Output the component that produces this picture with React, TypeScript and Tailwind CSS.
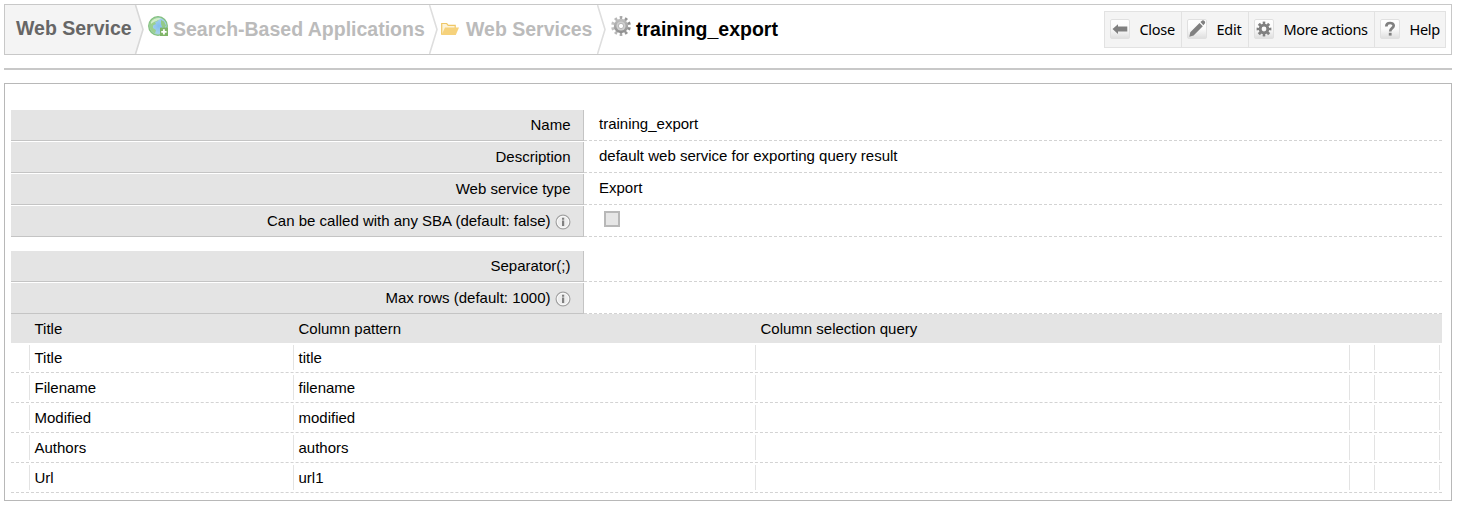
import React from "react";

function Globe() {
  return (
    <svg className="block h-5 w-5" viewBox="0 0 20 20">
      <defs>
        <radialGradient id="sea" cx="55%" cy="50%" r="55%">
          <stop offset="0" stopColor="#84bdf0" />
          <stop offset="0.7" stopColor="#a4d0ea" />
          <stop offset="1" stopColor="#a5d6a0" />
        </radialGradient>
      </defs>
      <circle cx="10" cy="10" r="9.3" fill="url(#sea)" stroke="#84c080" strokeWidth="1.3" />
      <path d="M2 6C4 2 8 1 11 2L10 5 7 6 8 8 5 9.500 5 12 8 14 7 17.500C2 15 .5 10 2 6z" fill="#9bd08f" />
      <path d="M13 4l3 1.500 2 4-1.500 2.500-2.500-1-1-3z" fill="#93ca88" />
      <path d="M3 6C5 2.500 9 1.500 13 2.200 11 4.500 6 5 3 8z" fill="#d2edcc" />
      <path d="M12.500 11.500H20V20h-8v-8z" fill="#80b568" />
      <path d="M15.900 13.200v5.400M13.200 15.900h5.400" stroke="#fff" strokeWidth="1.900" />
    </svg>
  );
}

function Folder() {
  return (
    <svg className="block h-[14px] w-[18px]" viewBox="0 0 18 14">
      <path d="M.7 12.800V1.500h5l1.500 1.800h7V6" fill="#fdf3d8" stroke="#efc766" strokeWidth="1.200" />
      <path d="M4 5.500h14L14.800 13H.5z" fill="#f6d27c" />
    </svg>
  );
}

function BigGear() {
  return (
    <svg className="block h-5 w-5" viewBox="0 0 20 20">
      <defs>
        <linearGradient id="steel" x1="0" y1="0" x2="0" y2="1">
          <stop offset="0" stopColor="#c2c2c2" />
          <stop offset="1" stopColor="#8c8c8c" />
        </linearGradient>
      </defs>
      <circle
        cx="10" cy="10" r="8.2" fill="none" stroke="url(#steel)" strokeWidth="3.400"
        pathLength="100" strokeDasharray="5 5" strokeDashoffset="2.500" transform="rotate(-90 10 10)"
      />
      <circle cx="10" cy="10" r="7.200" fill="url(#steel)" />
      <circle cx="10" cy="10" r="4.600" fill="#cfcfcf" />
      <circle cx="10" cy="10" r="2.600" fill="#fff" stroke="#a0a0a0" strokeWidth="0.700" />
    </svg>
  );
}

function Info() {
  return (
    <svg className="ml-1 mt-[4px] block h-4 w-4" viewBox="0 0 16 16">
      <circle cx="8" cy="8" r="6.900" fill="#ededed" stroke="#a2a2a2" strokeWidth="1.200" />
      <circle cx="8" cy="8" r="5.700" fill="none" stroke="#fafafa" strokeWidth="1" />
      <path d="M7 3.700h2.200v2H7zM7 6.600h2.200V12H7z" fill="#808080" />
    </svg>
  );
}

function Chevron() {
  return (
    <svg className="block h-[49px] w-[10px] shrink-0" viewBox="0 0 10 49">
      <path d="M.5 0L8 24.500.5 49" fill="none" stroke="#dedede" strokeWidth="1.600" />
    </svg>
  );
}

type ToolKind = "close" | "edit" | "more" | "help";

function ToolIcon({ kind }: { kind: ToolKind }) {
  return (
    <svg className="block h-5 w-5 shrink-0" viewBox="0 0 20 20">
      <defs>
        <linearGradient id="tile" x1="0" y1="0" x2="0" y2="1">
          <stop offset="0" stopColor="#ffffff" />
          <stop offset="0.500" stopColor="#fafafa" />
          <stop offset="1" stopColor="#dedede" />
        </linearGradient>
      </defs>
      <rect x=".5" y=".5" width="19" height="19" rx="1.500" fill="url(#tile)" stroke="#e0e0e0" />
      {kind === "close" && <path d="M2.500 10L8 5.300V7.600h9.300v4.800H8v2.600z" fill="#808080" />}
      {kind === "edit" && (
        <path d="M2.300 17.700l1-4.500L12.500 4l3.300 3.300-9.200 9.300zM13.400 3.100L15.200 1.500q1.200-.6 2.300.5t.5 2.300l-1.600 1.900z" fill="#808080" />
      )}
      {kind === "more" && (
        <>
          <circle
            cx="10" cy="10" r="5.900" fill="none" stroke="#808080" strokeWidth="3"
            pathLength="80" strokeDasharray="5.400 4.600" strokeDashoffset="2.700" transform="rotate(-90 10 10)"
          />
          <circle cx="10" cy="10" r="3.900" fill="none" stroke="#808080" strokeWidth="3" />
        </>
      )}
      {kind === "help" && (
        <>
          <path d="M6.300 7.400C6.300 3 13.800 3 13.700 6.800 13.600 9.200 10.200 9.200 10.200 12.400" fill="none" stroke="#808080" strokeWidth="2.700" />
          <rect x="8.800" y="13.800" width="2.800" height="2.800" fill="#808080" />
        </>
      )}
    </svg>
  );
}

const tools: { kind: ToolKind; label: string; cell: string; text: string }[] = [
  { kind: "close", label: "Close", cell: "w-[77px]", text: "tracking-[-0.3px]" },
  { kind: "edit", label: "Edit", cell: "w-[67px]", text: "tracking-[-0.2px]" },
  { kind: "more", label: "More actions", cell: "w-[126px]", text: "tracking-[-0.35px]" },
  { kind: "help", label: "Help", cell: "w-[71px]", text: "tracking-[-0.3px]" },
];

function Field({ label, info, children }: { label: string; info?: boolean; children?: React.ReactNode }) {
  return (
    <div className="mb-px flex h-[31px]">
      <div className="flex w-[573px] justify-end border-r border-b border-[#c4c4c4] bg-[#e4e4e4] pr-[12.5px] leading-[30px]">
        <span>{label}</span>
        {info && (
          <span className="mt-[4px]">
            <Info />
          </span>
        )}
      </div>
      <div className="flex-1 border-b border-dashed border-[#d3d3d3] pl-[15px] leading-[28px]">{children}</div>
    </div>
  );
}

const columns = [
  ["Title", "title"],
  ["Filename", "filename"],
  ["Modified", "modified"],
  ["Authors", "authors"],
  ["Url", "url1"],
];

const grid = "grid grid-cols-[18px_264px_462px_594px_25px_1fr]";

export default function App() {
  return (
    <div className="h-[506px] overflow-hidden bg-white px-1 pt-1 font-['Liberation_Sans',Arial,sans-serif] text-[15px] text-black">
      <header className="flex h-[51px] w-[1448px] border border-[#c8c8c8]">
        <div className="w-[130px] bg-[#f4f4f4] pl-[11px] text-[19.5px] leading-[46px] font-bold whitespace-nowrap text-[#666]">
          Web Service
        </div>
        <svg className="-ml-px block h-[49px] w-[10px] shrink-0" viewBox="0 0 10 49">
          <path d="M0 0h1.500L9 24.500 1.500 49H0z" fill="#f4f4f4" />
          <path d="M1.500 0L9 24.500 1.500 49" fill="none" stroke="#d8d8d8" strokeWidth="1.600" />
        </svg>
        <div className="flex w-[285px] pl-[4px]">
          <span className="mt-[11px]"><Globe /></span>
          <span className="ml-[5px] text-[19.5px] leading-[48px] font-bold whitespace-nowrap text-[#bbb]">Search-Based Applications</span>
        </div>
        <Chevron />
        <div className="flex w-[158px] pl-[2px]">
          <span className="mt-[17px]"><Folder /></span>
          <span className="ml-[7px] text-[19.5px] leading-[48px] font-bold whitespace-nowrap text-[#bbb]">Web Services</span>
        </div>
        <Chevron />
        <div className="flex pl-[4px]">
          <span className="mt-[11px]"><BigGear /></span>
          <span className="ml-[5px] text-[19.5px] leading-[48px] font-bold whitespace-nowrap">training_export</span>
        </div>
        <div className="mt-[6px] mr-[5px] ml-auto flex h-[37px] border-y border-l border-[#e2e2e2] bg-[#f4f4f4]">
          {tools.map((t) => (
            <div key={t.kind} className={`flex items-start border-r border-[#e2e2e2] pt-[7px] pl-[5px] ${t.cell}`}>
              <ToolIcon kind={t.kind} />
              <span className={`ml-[9.5px] font-['Noto_Sans',sans-serif] text-[14.5px] leading-5 whitespace-nowrap ${t.text}`}>{t.label}</span>
            </div>
          ))}
        </div>
      </header>
      <div className="mt-[13px] h-[2px] w-[1448px] bg-[#c8c8c8]" />
      <main className="mt-[13px] h-[418px] w-[1448px] border border-[#b8b8b8] pt-[26px] pr-[9px] pl-[6px]">
        <section>
          <Field label="Name">training_export</Field>
          <Field label="Description">default web service for exporting query result</Field>
          <Field label="Web service type">Export</Field>
          <Field label="Can be called with any SBA (default: false)" info>
            <div className="mt-[5px] ml-[5px] h-4 w-4 border-2 border-[#b8b8b8] bg-[#e6e6e6]" />
          </Field>
        </section>
        <section className="mt-[14px]">
          <Field label="Separator(;)" />
          <Field label="Max rows (default: 1000)" info />
        </section>
        <section className="-mt-px">
          <div className={`${grid} h-[29px] bg-[#e4e4e4] leading-[29px]`}>
            <span />
            <span className="pl-[5.5px]">Title</span>
            <span className="pl-[5.5px]">Column pattern</span>
            <span className="pl-[5.5px]">Column selection query</span>
          </div>
          {columns.map(([title, pattern]) => (
            <div key={title} className={`${grid} h-[30px] border-b border-dashed border-[#d3d3d3] pt-[2px] pb-[2px] leading-[25px]`}>
              <span />
              <span className="border-l border-[#e3e3e3] pl-[4.5px]">{title}</span>
              <span className="border-l border-[#e3e3e3] pl-[4.5px]">{pattern}</span>
              <span className="border-l border-[#e3e3e3]" />
              <span className="border-l border-[#e3e3e3]" />
              <span className="mr-[2px] border-x border-[#e3e3e3]" />
            </div>
          ))}
        </section>
      </main>
    </div>
  );
}
